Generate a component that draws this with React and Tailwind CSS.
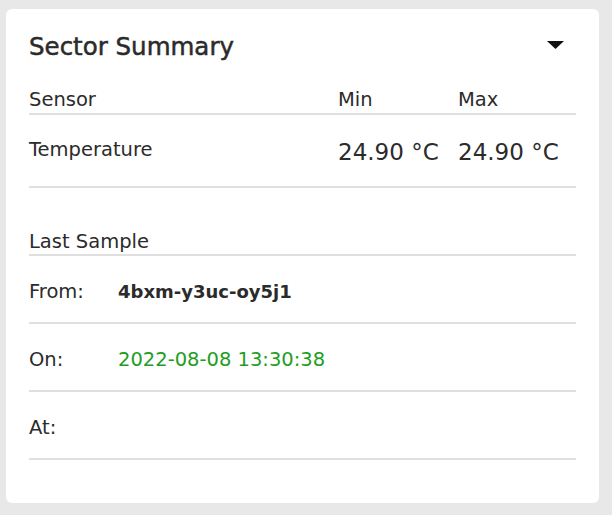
import { useState } from "react";

const font = { fontFamily: '"DejaVu Sans", "Noto Sans", sans-serif' };

export default function App() {
  const [open, setOpen] = useState(true);

  const sample = [
    { label: "From:", value: "4bxm-y3uc-oy5j1", cls: "text-[18px] font-semibold text-[#2b2b2b]" },
    { label: "On:", value: "2022-08-08 13:30:38", cls: "text-[#1e9e1e]" },
    { label: "At:", value: "", cls: "" },
  ];

  return (
    <div className="min-h-[515px] w-[612px] bg-[#e8e8e8] pt-[9px] pl-[6px]" style={font}>
      <div className="w-[593px] h-[494px] rounded-md bg-white px-[23px] pt-[22px] text-[#2b2b2b]">
        {/* Title */}
        <div className="flex items-center justify-between">
          <h1 className="text-[24.5px] leading-[32px] [-webkit-text-stroke:0.5px_#2b2b2b]">Sector Summary</h1>
          <button onClick={() => setOpen(!open)} className="mr-[12px] mb-[4px]">
            <svg width="17" height="8" viewBox="0 0 17 8">
              <path d="M0 0h17L8.5 8z" fill="#111" />
            </svg>
          </button>
        </div>

        {/* Table header */}
        <div className="mt-[25px] flex border-b-2 border-[#e0e0e0] pb-[1px] text-[19.5px] leading-[24px]">
          <div className="w-[309px]">Sensor</div>
          <div className="w-[120px]">Min</div>
          <div>Max</div>
        </div>

        {/* Temperature row */}
        <div className="flex h-[73px] border-b-2 border-[#e0e0e0] pt-[22px]">
          <div className="w-[309px] text-[19.5px] leading-[26px]">Temperature</div>
          <div className="w-[120px] text-[23px] leading-[30px]">24.90 °C</div>
          <div className="text-[23px] leading-[30px]">24.90 °C</div>
        </div>

        {/* Last sample */}
        <div className="border-b-2 border-[#e0e0e0] pt-[42px] text-[19.5px] leading-[24px]">
          Last Sample
        </div>

        {sample.map((row) => (
          <div
            key={row.label}
            className="flex h-[68px] items-start border-b-2 border-[#e0e0e0] pt-[24px] text-[19.5px] leading-[24px]"
          >
            <div className="w-[89px]">{row.label}</div>
            <div className={row.cls}>{row.value}</div>
          </div>
        ))}
      </div>
    </div>
  );
}
